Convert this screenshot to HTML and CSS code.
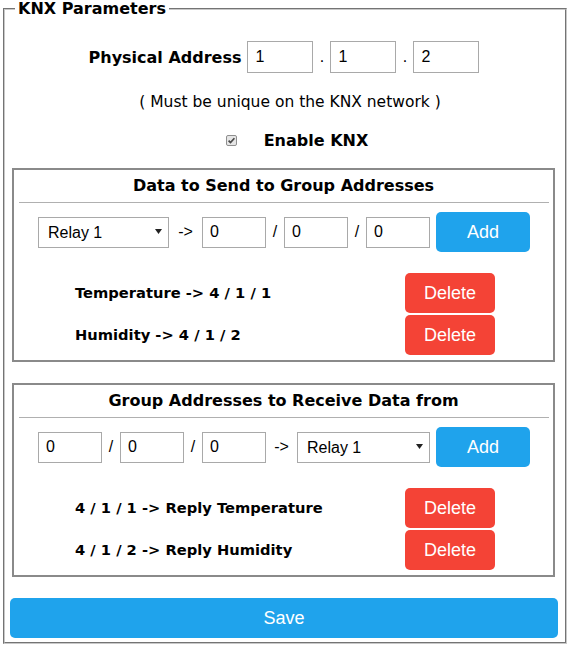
FILE: index.html
```html
<!DOCTYPE html>
<html>
<head>
<meta charset="utf-8">
<link rel="stylesheet" href="styles.css">
</head>
<body>
<fieldset class="panel">
  <legend class="panel-title">KNX Parameters</legend>

  <div class="addr-row">
    <span class="addr-label">Physical Address</span>
    <input class="field addr" type="text" value="1">
    <span class="dot">.</span>
    <input class="field addr" type="text" value="1">
    <span class="dot">.</span>
    <input class="field addr" type="text" value="2">
  </div>

  <p class="note">( Must be unique on the KNX network )</p>

  <div class="enable-row">
    <span class="check">
      <svg width="11" height="11" viewBox="0 0 11 11">
        <rect x="0.5" y="0.5" width="10" height="10" rx="1.5" fill="#e6e6e6" stroke="#8f8f8f"/>
        <path d="M2.6 5.6 L4.5 7.6 L8.4 3.2" fill="none" stroke="#4a4a4a" stroke-width="1.7"/>
      </svg>
    </span>
    <span class="enable-label">Enable KNX</span>
  </div>

  <div class="box">
    <div class="box-title">Data to Send to Group Addresses</div>
    <hr class="rule">
    <div class="entry-row">
      <span class="select-wrap sel-131">
        <select class="select"><option>Relay 1</option></select>
        <svg class="caret" width="7" height="5" viewBox="0 0 7 5"><path d="M0 0 H7 L3.5 5 Z" fill="#222"/></svg>
      </span>
      <span class="sep arrow-33">-&gt;</span>
      <input class="field ga" type="text" value="0">
      <span class="sep slash">/</span>
      <input class="field ga" type="text" value="0">
      <span class="sep slash">/</span>
      <input class="field ga" type="text" value="0">
      <button class="btn btn-add">Add</button>
    </div>
    <div class="item-row first">
      <span class="item-label">Temperature -&gt; 4 / 1 / 1</span>
      <button class="btn btn-del">Delete</button>
    </div>
    <div class="item-row">
      <span class="item-label">Humidity -&gt; 4 / 1 / 2</span>
      <button class="btn btn-del">Delete</button>
    </div>
  </div>

  <div class="box second">
    <div class="box-title">Group Addresses to Receive Data from</div>
    <hr class="rule">
    <div class="entry-row">
      <input class="field ga" type="text" value="0">
      <span class="sep slash">/</span>
      <input class="field ga" type="text" value="0">
      <span class="sep slash">/</span>
      <input class="field ga" type="text" value="0">
      <span class="sep arrow-31">-&gt;</span>
      <span class="select-wrap sel-133">
        <select class="select"><option>Relay 1</option></select>
        <svg class="caret" width="7" height="5" viewBox="0 0 7 5"><path d="M0 0 H7 L3.5 5 Z" fill="#222"/></svg>
      </span>
      <button class="btn btn-add">Add</button>
    </div>
    <div class="item-row first">
      <span class="item-label">4 / 1 / 1 -&gt; Reply Temperature</span>
      <button class="btn btn-del">Delete</button>
    </div>
    <div class="item-row">
      <span class="item-label">4 / 1 / 2 -&gt; Reply Humidity</span>
      <button class="btn btn-del">Delete</button>
    </div>
  </div>

  <button class="btn btn-save">Save</button>
</fieldset>
</body>
</html>
```

FILE: styles.css
```css
html, body {
  margin: 0;
  padding: 0;
  background: #ffffff;
}

body {
  font-family: "DejaVu Sans", Verdana, sans-serif;
  color: #000;
  width: 571px;
}

.panel {
  margin: 0 4px 0 3px;
  padding: 0 7px 4px 5px;
  border: 2px groove #c8c8c8;
  min-width: 0;
}

.panel-title {
  font-weight: bold;
  font-size: 16px;
  line-height: 17px;
  padding: 0 3px;
  margin-left: 5px;
}

.addr-row {
  display: flex;
  justify-content: center;
  align-items: center;
  margin-top: 24px;
}

.addr-label {
  font-weight: bold;
  font-size: 16px;
  margin-right: 6px;
}

.field {
  box-sizing: border-box;
  font-family: "Liberation Sans", Arial, sans-serif;
  font-size: 16px;
  color: #000;
  border: 1px solid #a9a9a9;
  padding: 0 0 0 7px;
  margin: 0;
  outline: none;
}

.addr {
  width: 66px;
  height: 32px;
}

.dot {
  font-family: "Liberation Sans", Arial, sans-serif;
  font-size: 16px;
  width: 17px;
  text-align: center;
}

.note {
  margin: 20px 0 0;
  padding-left: 12px;
  font-size: 15.5px;
  line-height: 18px;
  text-align: center;
}

.enable-row {
  display: flex;
  justify-content: center;
  align-items: center;
  margin-top: 20px;
  padding-left: 26px;
  height: 18px;
}

.check {
  display: flex;
  width: 11px;
  height: 11px;
  margin-right: 27px;
}

.enable-label {
  font-weight: bold;
  font-size: 16px;
}

.box {
  margin: 19px 3px 0 2px;
  border: 2px solid #8a8a8a;
  padding: 6px 0 5px;
}

.box.second {
  margin-top: 21px;
}

.box-title {
  font-weight: bold;
  font-size: 16px;
  line-height: 19px;
  text-align: center;
}

.rule {
  border: 0;
  border-top: 1px solid #b0b0b0;
  margin: 7px 4px 0 5px;
  height: 0;
}

.entry-row {
  display: flex;
  align-items: center;
  padding-left: 24px;
  margin-top: 9px;
  height: 40px;
}

.select-wrap {
  position: relative;
  display: flex;
  height: 31px;
}

.sel-131 { width: 131px; }
.sel-133 { width: 133px; }

.select {
  appearance: none;
  -webkit-appearance: none;
  box-sizing: border-box;
  width: 100%;
  height: 100%;
  font-family: "Liberation Sans", Arial, sans-serif;
  font-size: 16px;
  color: #000;
  background: #fff;
  border: 1px solid #a9a9a9;
  border-radius: 0;
  padding: 0 0 0 9px;
  margin: 0;
  outline: none;
}

.caret {
  position: absolute;
  right: 7px;
  top: 12px;
  pointer-events: none;
}

.ga {
  width: 64px;
  height: 31px;
}

.sep {
  font-family: "Liberation Sans", Arial, sans-serif;
  font-size: 16px;
  text-align: center;
}

.slash { width: 18px; }
.arrow-33 { width: 33px; }
.arrow-31 { width: 31px; }

.btn {
  font-family: "Liberation Sans", Arial, sans-serif;
  font-size: 18px;
  color: #fff;
  border: 0;
  border-radius: 5px;
  padding: 0;
  margin: 0;
  cursor: pointer;
}

.btn-add {
  width: 94px;
  height: 40px;
  margin-left: 6px;
  background: #1fa3ec;
}

.item-row {
  display: flex;
  align-items: center;
  padding-left: 61px;
  margin-top: 2px;
}

.item-row.first {
  margin-top: 21px;
}

.item-label {
  width: 330px;
  font-weight: bold;
  font-size: 14.7px;
  line-height: 16px;
  margin-top: -1px;
}

.btn-del {
  width: 90px;
  height: 40px;
  background: #f44336;
}

.btn-save {
  display: block;
  width: 548px;
  height: 40px;
  margin-top: 21px;
  background: #1fa3ec;
}
```
